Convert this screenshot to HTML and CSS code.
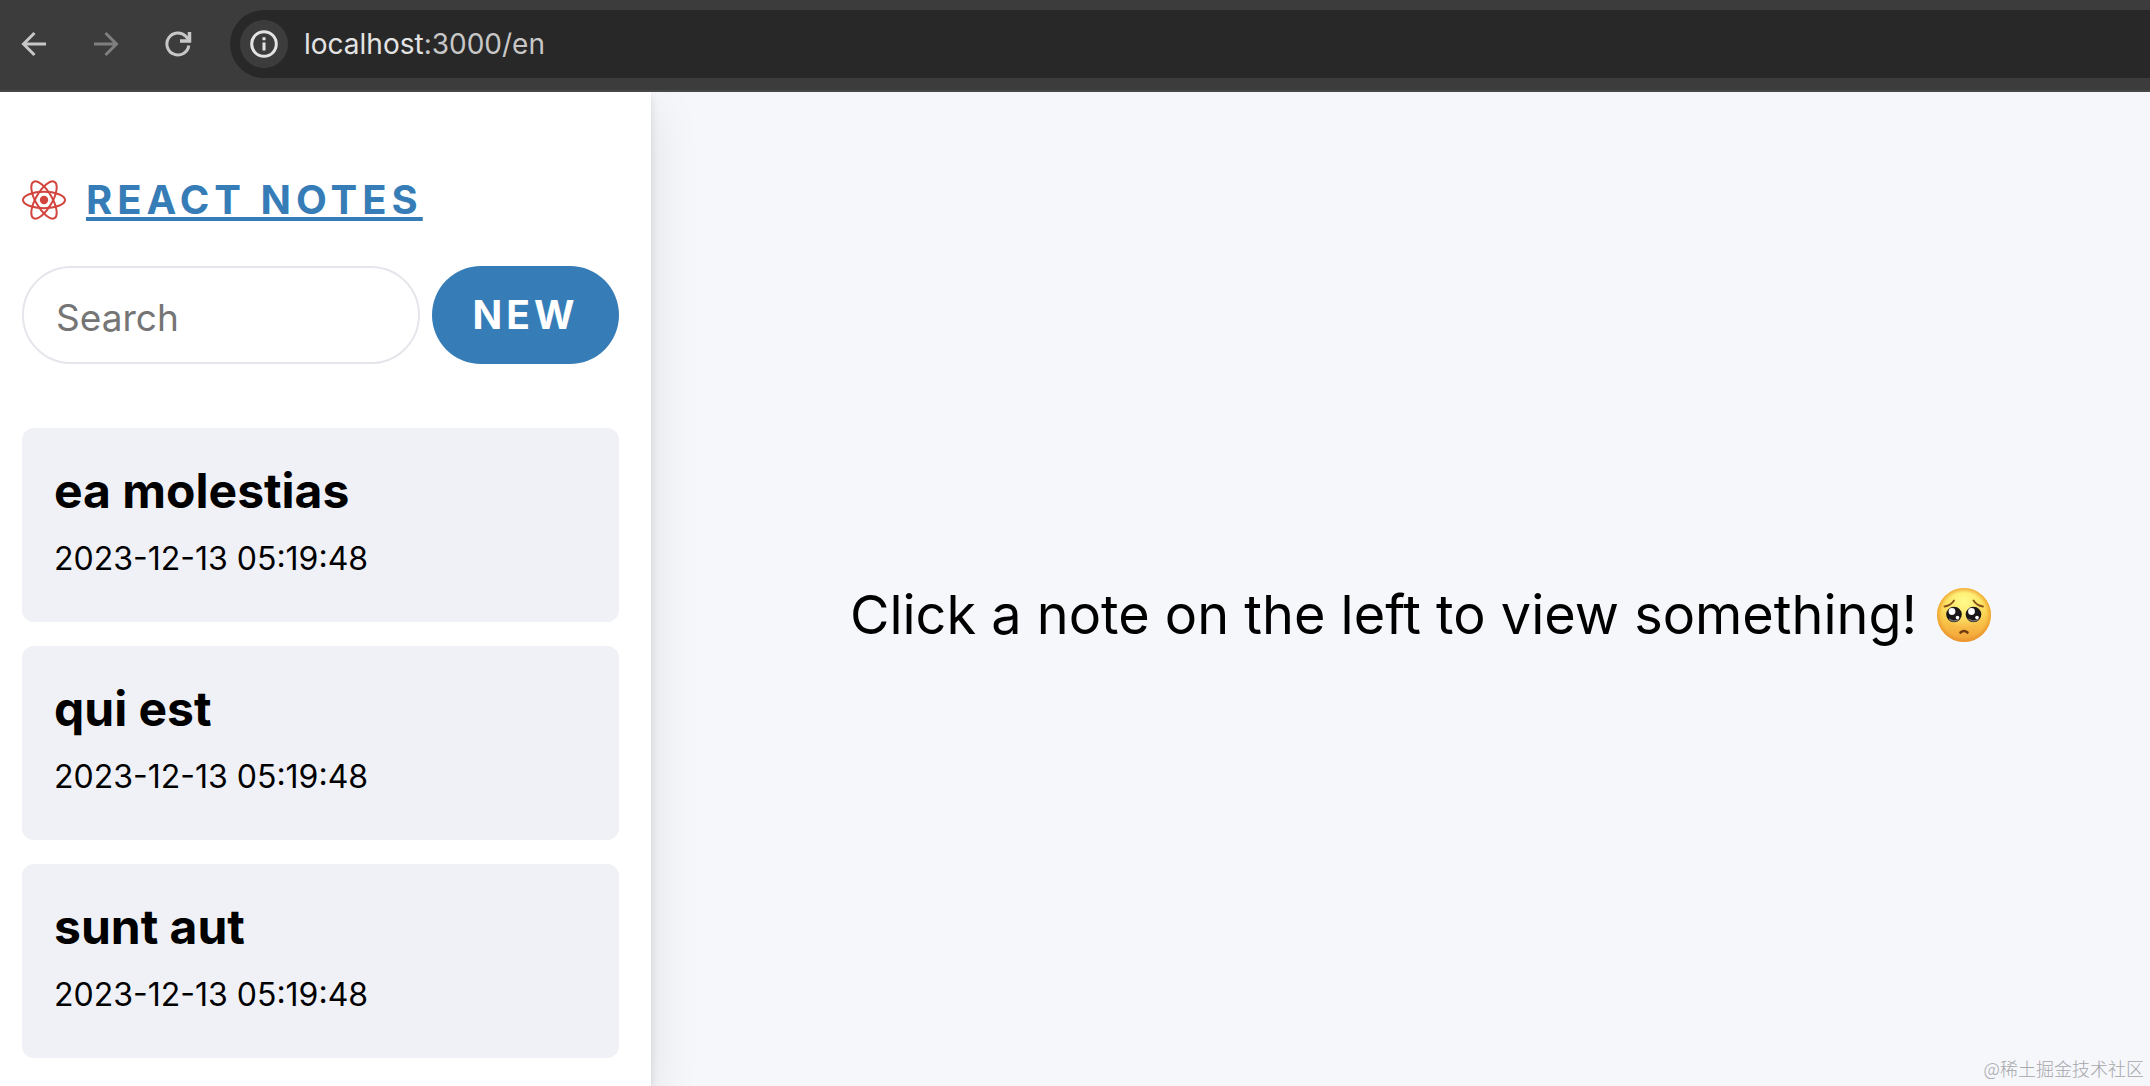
FILE: index.html
```html
<!DOCTYPE html>
<html lang="en">
<head>
<meta charset="utf-8">
<title>React Notes</title>
<link rel="stylesheet" href="styles.css">
</head>
<body>
<header class="toolbar">
  <nav class="toolbar-nav">
    <button class="nav-button" type="button" aria-label="Back">
      <svg viewBox="0 0 24 24"><path d="M24 12H2M12.500 1L1.500 12l11 11"/></svg>
    </button>
    <button class="nav-button nav-button-off" type="button" aria-label="Forward">
      <svg viewBox="0 0 24 24"><path d="M0 12h22M11.500 1l11 11-11 11"/></svg>
    </button>
    <button class="nav-button" type="button" aria-label="Reload">
      <svg viewBox="0 0 24 24"><path d="M22.800 13.500A11 11 0 1 1 20 4.500L22 7"/><path d="M23.500 0v9H14" stroke-width="3.500"/></svg>
    </button>
  </nav>
  <div class="address">
    <button class="site-info" type="button" aria-label="Site information">
      <svg viewBox="0 0 28 28"><circle cx="14" cy="14" r="12.300"/><path d="M14 12.500v8M14 7.200v3"/></svg>
    </button>
    <span class="url"><span class="url-host">localhost</span>:3000/en</span>
  </div>
</header>
<div class="app">
  <aside class="sidebar">
    <div class="brand">
      <svg class="logo" viewBox="-22 -20 44 40" aria-hidden="true">
        <circle r="4.200"/>
        <g><ellipse rx="21" ry="8.200"/><ellipse rx="21" ry="8.200" transform="rotate(60)"/><ellipse rx="21" ry="8.200" transform="rotate(120)"/></g>
      </svg>
      <a class="brand-link" href="#">REACT NOTES</a>
    </div>
    <form class="menubar">
      <input class="search" type="text" placeholder="Search" aria-label="Search">
      <button class="new-button" type="button">NEW</button>
    </form>
    <ul class="notes">
      <li class="note"><strong class="note-title">ea molestias</strong><small class="note-date">2023-12-13 05:19:48</small></li>
      <li class="note"><strong class="note-title">qui est</strong><small class="note-date">2023-12-13 05:19:48</small></li>
      <li class="note"><strong class="note-title">sunt aut</strong><small class="note-date">2023-12-13 05:19:48</small></li>
    </ul>
  </aside>
  <main class="viewer">
    <p class="empty">
      <span>Click a note on the left to view something!</span>
      <svg class="face" viewBox="0 0 54 54" role="img" aria-label="Pleading face">
        <defs>
          <linearGradient id="skin" x1="0" y1="0" x2="0" y2="1"><stop offset="0" stop-color="#fdde4e"/><stop offset=".5" stop-color="#fbcf4e"/><stop offset="1" stop-color="#f1a038"/></linearGradient>
          <radialGradient id="glow" cx=".5" cy=".25" r=".5"><stop offset="0" stop-color="#fffb8c"/><stop offset="1" stop-color="#fffb8c" stop-opacity="0"/></radialGradient>
          <radialGradient id="rim"><stop offset=".82" stop-color="#e88b25" stop-opacity="0"/><stop offset="1" stop-color="#e88b25" stop-opacity=".65"/></radialGradient>
        </defs>
        <circle cx="27" cy="27" r="27" fill="url(#skin)"/>
        <circle cx="27" cy="27" r="27" fill="url(#glow)"/>
        <circle cx="27" cy="27" r="27" fill="url(#rim)"/>
        <path d="M7.500 18.500Q14 17.500 17 12.500M46 18.500Q39.500 17.500 36.500 12.500" fill="none" stroke="#85501c" stroke-width="1.800" stroke-linecap="round"/>
        <circle cx="17" cy="26.500" r="7.800" fill="#1b1718"/><circle cx="36.500" cy="26.500" r="7.800" fill="#1b1718"/>
        <path d="M12 31q5 4 10 0M31.500 31q5 4 10 0" fill="none" stroke="#77706f" stroke-width="1.500"/>
        <g fill="#fff"><circle cx="15" cy="23.500" r="3.400"/><circle cx="34.500" cy="23.500" r="3.400"/><circle cx="20.500" cy="29.500" r="1.800"/><circle cx="40" cy="29.500" r="1.800"/></g>
        <path d="M23.500 44.500q3.500-3 7 0" fill="none" stroke="#713b12" stroke-width="2.600" stroke-linecap="round"/>
      </svg>
    </p>
    <span class="credit">@稀土掘金技术社区</span>
  </main>
</div>
</body>
</html>
```
FILE: styles.css
```css
* { box-sizing: border-box; }

body {
  margin: 0;
  min-height: 100vh;
  display: flex;
  flex-direction: column;
  font-family: Inter, "Liberation Sans", sans-serif;
  color: #000;
  background: #fff;
}

button, input { font: inherit; }

.toolbar {
  display: flex;
  align-items: center;
  gap: 40px;
  height: 92px;
  padding: 0 0 2px 22px;
  background: #3c3c3c;
  border-bottom: 2px solid #474747;
}

.toolbar-nav { display: flex; gap: 48px; }

.nav-button {
  width: 24px;
  height: 24px;
  padding: 0;
  border: 0;
  background: none;
  color: #c7c7c7;
}
.nav-button-off { color: #7f7f7f; }
.nav-button svg {
  display: block;
  fill: none;
  stroke: currentColor;
  stroke-width: 3;
  overflow: visible;
}

.address {
  flex: 1;
  display: flex;
  align-items: center;
  gap: 16px;
  height: 68px;
  padding-left: 10px;
  border-radius: 34px 0 0 34px;
  background: #282828;
}

.site-info {
  display: grid;
  place-items: center;
  width: 48px;
  height: 48px;
  padding: 0;
  border: 0;
  border-radius: 50%;
  background: #3c3c3c;
}
.site-info svg {
  width: 28px;
  height: 28px;
  fill: none;
  stroke: #e3e3e3;
  stroke-width: 3;
}

.url { font-size: 28px; color: #c7c7c7; }
.url-host { color: #e3e3e3; }

.app { flex: 1; display: flex; overflow: hidden; }

.sidebar {
  position: relative;
  z-index: 1;
  flex: none;
  width: 651px;
  padding: 84px 32px 28px 22px;
  background: #fff;
  box-shadow: 0 16px 48px rgba(0, 0, 0, .1), 0 4px 8px rgba(0, 0, 0, .1);
}

.brand {
  display: flex;
  align-items: center;
  gap: 20px;
  height: 48px;
}
.logo {
  width: 44px;
  height: 40px;
  fill: #d3463f;
}
.logo g { fill: none; stroke: #d3463f; stroke-width: 2; }
.brand-link {
  font-size: 40px;
  line-height: 48px;
  font-weight: 700;
  letter-spacing: 5px;
  color: #367db7;
  text-decoration-thickness: 4px;
  text-underline-offset: 3px;
  text-decoration-skip-ink: none;
}

.menubar {
  display: flex;
  gap: 12px;
  margin: 42px 0 64px;
}
.search {
  flex: 1;
  min-width: 0;
  height: 98px;
  padding: 4px 32px 0;
  border: 2px solid #e5e6ec;
  border-radius: 49px;
  font-size: 37px;
  background: #fff;
  outline: 0;
}
.search::placeholder { color: #757575; opacity: 1; }
.new-button {
  width: 187px;
  height: 98px;
  padding: 0 0 2px;
  border: 0;
  border-radius: 49px;
  font-size: 39px;
  font-weight: 700;
  letter-spacing: 4px;
  color: #fff;
  background: #367db7;
}

.notes {
  display: grid;
  gap: 24px;
  margin: 0;
  padding: 0;
  list-style: none;
}
.note {
  display: flex;
  flex-direction: column;
  gap: 12px;
  height: 194px;
  padding: 33px 32px 31px;
  border-radius: 12px;
  background: #f0f1f6;
}
.note-title { font-size: 48px; line-height: 60px; }
.note-date { font-size: 32px; line-height: 52px; }

.viewer {
  position: relative;
  flex: 1;
  display: flex;
  align-items: center;
  justify-content: center;
  padding: 52px 0 0 40px;
  background: #f6f7fb;
}
.empty {
  display: flex;
  align-items: center;
  gap: 20px;
  margin: 0;
  font-size: 54px;
  line-height: 72px;
  white-space: nowrap;
}
.face { width: 54px; height: 54px; }

.credit {
  position: absolute;
  right: 6px;
  bottom: 6px;
  font: 300 18px/24px "Noto Sans CJK SC", sans-serif;
  color: #a5a6aa;
}
```
